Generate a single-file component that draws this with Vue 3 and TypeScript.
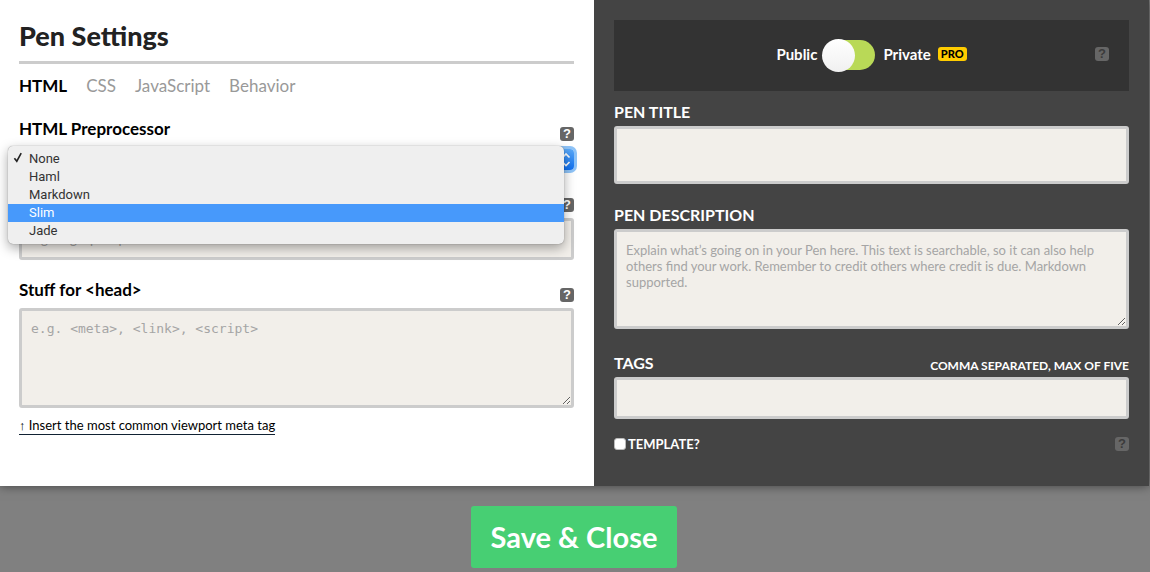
<script setup lang="ts">
import { ref } from 'vue'

const tabs: string[] = ['HTML', 'CSS', 'JavaScript', 'Behavior']
const activeTab = ref('HTML')

const preprocessors: string[] = ['None', 'Haml', 'Markdown', 'Slim', 'Jade']
const selected = ref('None')
const highlighted = ref('Slim')

const htmlClass = ref('')
const headStuff = ref('')
const title = ref('')
const description = ref('')
const tags = ref('')
const isPrivate = ref(false)
const isTemplate = ref(false)
</script>

<template>
  <div class="page">
    <form class="modal" @submit.prevent>
      <section class="main-panel">
        <h1>Pen Settings</h1>
        <nav class="tabs">
          <a
            v-for="tab in tabs"
            :key="tab"
            href="#"
            :class="{ active: tab === activeTab }"
            @click.prevent="activeTab = tab"
          >{{ tab }}</a>
        </nav>

        <div class="field">
          <div class="field-head">
            <label for="preprocessor">HTML Preprocessor</label>
            <button type="button" class="help">?</button>
          </div>
          <div class="select-wrap">
            <select id="preprocessor" v-model="selected">
              <option v-for="name in preprocessors" :key="name">{{ name }}</option>
            </select>
            <span class="stepper">
              <svg viewBox="0 0 16 21" width="16" height="21">
                <path d="M4.5 8.5 8 5 11.5 8.5M4.5 13 8 16.5 11.5 13" />
              </svg>
            </span>
            <ul class="menu" role="listbox">
              <li
                v-for="name in preprocessors"
                :key="name"
                role="option"
                :aria-selected="name === selected"
                :class="{ highlighted: name === highlighted }"
                @mouseenter="highlighted = name"
                @click="selected = name"
              >
                <span class="tick">
                  <svg v-if="name === selected" viewBox="0 0 10 11" width="10" height="11">
                    <path d="M1.4 6.2 3.8 9.2 8.2 1.2" />
                  </svg>
                </span>
                {{ name }}
              </li>
            </ul>
          </div>
        </div>

        <div class="field">
          <div class="field-head">
            <button type="button" class="help">?</button>
          </div>
          <input v-model="htmlClass" class="box line" type="text" aria-label="HTML classes" placeholder="e.g. single post post-1234">
        </div>

        <div class="field">
          <div class="field-head">
            <label for="head-stuff">Stuff for &lt;head&gt;</label>
            <button type="button" class="help">?</button>
          </div>
          <textarea id="head-stuff" v-model="headStuff" class="box area code" placeholder="e.g. <meta>, <link>, <script>"></textarea>
          <a href="#" class="insert" @click.prevent><span class="arrow">↑</span> Insert the most common viewport meta tag</a>
        </div>
      </section>

      <section class="side-panel">
        <div class="privacy">
          <div class="privacy-choice">
            <label for="privacy">Public</label>
            <input id="privacy" v-model="isPrivate" class="switch" type="checkbox" role="switch">
            <label for="privacy">Private</label>
            <span class="pro">PRO</span>
          </div>
          <button type="button" class="help dim">?</button>
        </div>

        <div class="side-field">
          <label for="pen-title">PEN TITLE</label>
          <input id="pen-title" v-model="title" class="box tall" type="text">
        </div>

        <div class="side-field">
          <label for="pen-description">PEN DESCRIPTION</label>
          <textarea
            id="pen-description"
            v-model="description"
            class="box area"
            placeholder="Explain what’s going on in your Pen here. This text is searchable, so it can also help others find your work. Remember to credit others where credit is due. Markdown supported."
          ></textarea>
        </div>

        <div class="side-field">
          <div class="tags-head">
            <label for="tags">TAGS</label>
            <span class="hint">COMMA SEPARATED, MAX OF FIVE</span>
          </div>
          <input id="tags" v-model="tags" class="box line" type="text">
        </div>

        <div class="template-row">
          <input id="template" v-model="isTemplate" class="tickbox" type="checkbox">
          <label for="template">TEMPLATE?</label>
          <button type="button" class="help dim">?</button>
        </div>
      </section>
    </form>

    <footer class="actions">
      <button type="button" class="save">Save &amp; Close</button>
    </footer>
  </div>
</template>

<style>
body {
  background: #808080;
}
</style>

<style scoped>
* {
  box-sizing: border-box;
}

.page {
  padding-right: 1px;
  font-family: Lato, "Liberation Sans", sans-serif;
  font-size: 16px;
  line-height: 20px;
  color: #000;
}

.modal {
  display: grid;
  grid-template-columns: 594fr 555fr;
  box-shadow: 0 0 10px rgba(0, 0, 0, 0.5);
}

.main-panel {
  padding: 16px 20px 20px 19px;
  background: #fff;
}

h1 {
  margin: 0;
  padding-bottom: 5px;
  border-bottom: 3px solid #ccc;
  font-size: 27px;
  font-weight: 900;
  line-height: 40px;
  color: #222;
}

.tabs {
  display: flex;
  gap: 19px;
  margin: 12px 0 23px;
  font-size: 17px;
}

.tabs a {
  color: #999;
  text-decoration: none;
}

.tabs a.active {
  color: #000;
  font-weight: 700;
}

.field {
  margin-bottom: 20px;
}

.field-head {
  display: flex;
  justify-content: space-between;
  height: 22px;
  margin-bottom: 6px;
  font-size: 17px;
  font-weight: 700;
}

.help {
  align-self: flex-end;
  width: 14px;
  height: 14px;
  margin-left: auto;
  padding: 0;
  border: 0;
  border-radius: 3px;
  background: #666;
  color: #fff;
  font: 700 13px/14px "Liberation Sans", sans-serif;
}

.help.dim {
  color: #3b3b3b;
}

.select-wrap {
  position: relative;
  height: 21px;
}

.field-head:has(+ .select-wrap) {
  margin-bottom: 8px;
}

select {
  display: block;
  width: 100%;
  height: 21px;
  padding: 0 8px;
  border: 0;
  border-radius: 4px;
  outline: 0;
  appearance: none;
  background: #fff;
  box-shadow: 0 0 0 3px #8fc4f8;
  font-size: 13px;
}

.stepper {
  position: absolute;
  top: 0;
  right: 0;
  height: 21px;
  border-radius: 0 4px 4px 0;
  background: linear-gradient(#5aa9f8, #0f70f2);
  pointer-events: none;
}

.stepper svg {
  display: block;
  fill: none;
  stroke: #fff;
  stroke-width: 1.6;
}

.menu {
  position: absolute;
  z-index: 1;
  top: -3px;
  left: -11px;
  right: 10px;
  margin: 0;
  padding: 4px 0;
  border-radius: 5px;
  background: #efefef;
  box-shadow: 0 0 1px rgba(0, 0, 0, 0.5), 0 4px 12px rgba(0, 0, 0, 0.35);
  list-style: none;
  font: 13px/18px Roboto, "Liberation Sans", sans-serif;
  color: #333;
}

.menu li {
  display: flex;
}

.menu li.highlighted {
  background: #4799fb;
  color: #fff;
}

.tick {
  width: 21px;
  padding: 2px 0 0 5px;
}

.tick svg {
  display: block;
  fill: none;
  stroke: #222;
  stroke-width: 1.6;
}

.box {
  display: block;
  width: 100%;
  margin: 0;
  padding: 10px 9px;
  border: 3px solid #ccc;
  border-radius: 3px;
  outline: 0;
  background: #f2efea;
  font: 13px/16px Lato, "Liberation Sans", sans-serif;
  color: #333;
}

.box::placeholder {
  color: #a5a5a5;
}

.line {
  height: 42px;
}

.tall {
  height: 58px;
}

.area {
  height: 100px;
}

.code {
  font-family: "DejaVu Sans Mono", monospace;
}

.insert {
  display: inline-block;
  margin-top: 9px;
  border-bottom: 1px solid #123;
  font-size: 13px;
  line-height: 16px;
  color: #000;
  text-decoration: none;
}

.arrow {
  font-family: "Liberation Sans", sans-serif;
}

.side-panel {
  padding: 20px 20px 32px;
  background: #444;
  color: #fff;
  font-weight: 700;
}

.privacy {
  display: grid;
  grid-template-columns: 1fr auto 1fr;
  align-items: center;
  height: 71px;
  margin-bottom: 11px;
  padding: 0 20px 4px;
  background: #333;
}

.privacy-choice {
  display: flex;
  grid-column: 2;
  align-items: center;
  font-size: 15px;
}

.privacy .help {
  align-self: center;
}

.switch {
  position: relative;
  width: 53px;
  height: 30px;
  margin: 2px 8px 0 5px;
  appearance: none;
}

.switch::before {
  content: "";
  position: absolute;
  inset: 0 0 0 4px;
  border-radius: 15px;
  background: #b9d957;
}

.switch::after {
  content: "";
  position: absolute;
  top: -1px;
  left: 0;
  width: 33px;
  height: 33px;
  border-radius: 50%;
  background: linear-gradient(#fff, #f0f0f0);
}

.switch:checked::after {
  left: 20px;
}

.pro {
  margin-left: 7px;
  padding: 0 3px;
  border-radius: 3px;
  background: #fc0;
  font-size: 11px;
  font-weight: 900;
  line-height: 14px;
  color: #000;
}

.side-field {
  margin-bottom: 21px;
}

.side-field > label,
.tags-head {
  display: flex;
  justify-content: space-between;
  height: 20px;
  margin-bottom: 4px;
}

.side-field:has(textarea) {
  margin-bottom: 24px;
}

.hint {
  padding-top: 3px;
  font-size: 12px;
}

.side-field:has(.tags-head) {
  margin-bottom: 15px;
}

.template-row {
  display: flex;
  align-items: center;
  font-size: 13px;
}

.tickbox {
  width: 12px;
  height: 12px;
  margin: 0 2px 0 0;
  border: 1px solid #bbb;
  border-radius: 3px;
  appearance: none;
  background: #fff;
}

.tickbox:checked {
  background: #4799fb;
}

.template-row .help {
  align-self: center;
}

.actions {
  display: flex;
  justify-content: center;
  padding: 20px 1px 4px 0;
}

.save {
  height: 62px;
  padding: 0 20px;
  border: 0;
  border-radius: 3px;
  background: #47cf73;
  color: #fff;
  font: 700 29px/62px Lato, "Liberation Sans", sans-serif;
}
</style>
